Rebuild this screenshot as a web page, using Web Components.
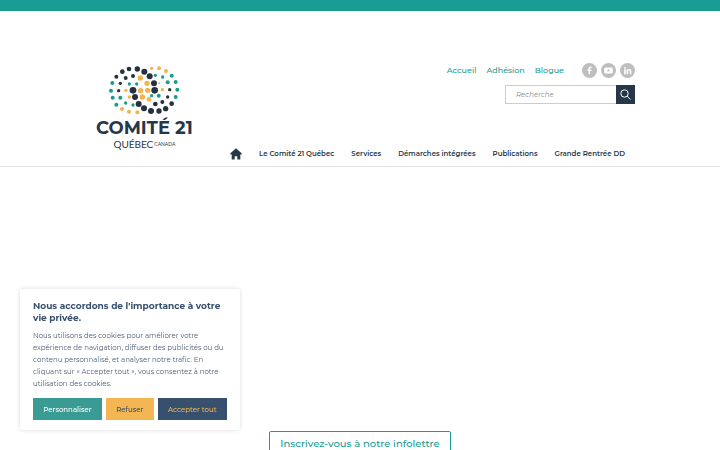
<!DOCTYPE html>
<html lang="fr">
<head>
<meta charset="utf-8">
<meta name="viewport" content="width=device-width, initial-scale=1">
<title>Comité 21 Québec</title>
<style>
  html {
    scrollbar-width: none;
  }

  body {
    --teal: #189c93;
    --navy: #26374a;
    margin: 0;
    background: #fff;
    color: var(--navy);
    font-family: Montserrat, Inter, "Open Sans", sans-serif;
  }
</style>
</head>
<body>
<site-header></site-header>
<newsletter-banner>Inscrivez-vous à notre infolettre</newsletter-banner>
<cookie-notice>
  <span slot="title">Nous accordons de l'importance à votre vie privée.</span>
  Nous utilisons des cookies pour améliorer votre expérience de navigation, diffuser des publicités ou du contenu personnalisé, et analyser notre trafic. En cliquant sur « Accepter tout », vous consentez à notre utilisation des cookies.
</cookie-notice>

<script>
class SiteLogo extends HTMLElement {
  connectedCallback() {
    // x, y, radius for each colour of the globe
    const dots = {
      "#26303f": [
        [72, 19, 7], [97, 19, 8], [52, 27, 7], [34, 42, 6], [118, 27, 9],
        [84, 40, 6], [62, 46, 6], [46, 62, 5], [41, 84, 5], [84, 83, 10],
        [90, 103, 9], [101, 124, 9], [117, 137, 9], [138, 145, 9],
        [162, 145, 8], [182, 138, 8], [200, 123, 7], [151, 124, 7],
        [172, 118, 6], [134, 41, 9], [147, 62, 9], [149, 83, 10],
        [194, 81, 5], [188, 103, 5],
      ],
      "#189c8d": [
        [22, 61, 6], [73, 64, 5], [95, 64, 5], [18, 84, 6], [23, 105, 6],
        [46, 105, 6], [34, 126, 6], [62, 121, 5], [84, 127, 5],
        [151, 38, 5], [173, 43, 5], [200, 39, 6], [188, 59, 6],
        [212, 58, 6], [217, 81, 6], [212, 103, 6], [140, 99, 5],
        [161, 99, 6],
      ],
      "#f4b34d": [
        [106, 46, 8], [63, 83, 5], [107, 84, 8], [73, 103, 5],
        [112, 103, 8], [51, 139, 6], [72, 147, 6], [97, 149, 6],
        [140, 17, 5], [162, 17, 6], [183, 25, 6], [126, 62, 8],
        [162, 62, 3], [128, 83, 8], [172, 81, 5], [132, 110, 7],
      ],
    };

    const circles = Object.entries(dots).map(([fill, list]) =>
      `<g fill="${fill}">${list.map(([x, y, r]) => `<circle cx="${x}" cy="${y}" r="${r}"/>`).join("")}</g>`
    ).join("");

    this.attachShadow({ mode: "open" }).innerHTML = `
      <style>
        :host {
          display: block;
        }

        a {
          display: flex;
          flex-direction: column;
          align-items: center;
          color: var(--navy);
          text-decoration: none;
          white-space: nowrap;
        }

        svg {
          width: 72px;
          height: 52px;
          margin-bottom: 2px;
        }

        .name {
          font-size: 18px;
          line-height: 20px;
          font-weight: 700;
        }

        .place {
          display: flex;
          align-items: center;
          gap: 1px;
          font-family: Lato, sans-serif;
          font-size: 10px;
          line-height: 12px;
        }

        small {
          font-size: 5px;
        }
      </style>
      <a href="#">
        <svg viewBox="9 4 216 156" aria-hidden="true">${circles}</svg>
        <span class="name">COMITÉ 21</span>
        <span class="place">QUÉBEC <small>CANADA</small></span>
      </a>
    `;
  }
}

class SocialLink extends HTMLElement {
  connectedCallback() {
    const icons = {
      Facebook: `<path d="M6.600 11.200V8H5.400V6.500h1.200V5.400c0-1.200.7-1.900 1.900-1.900l1 .1v1.300h-.7c-.5 0-.7.3-.7.7v.9h1.300L9.200 8H8.100v3.200z"/>`,
      YouTube: `<path fill-rule="evenodd" d="M5 4.400h5c1.300 0 1.800.6 1.800 1.700v2.800c0 1.100-.5 1.700-1.800 1.700H5c-1.300 0-1.800-.6-1.800-1.700V6.100C3.200 5 3.700 4.400 5 4.400zM6.600 6v3l2.500-1.500z"/>`,
      LinkedIn: `<path d="M4 6.200h1.600v5H4zM4 3.900h1.600v1.500H4zM6.500 6.200H8v.7c.4-.6.9-.8 1.500-.8 1.300 0 1.800.8 1.800 2.100v3H9.700V8.500c0-.6-.2-1-.8-1-.5 0-.8.4-.8 1v2.700H6.500z"/>`,
    };
    const name = this.getAttribute("name");

    this.attachShadow({ mode: "open" }).innerHTML = `
      <style>
        :host {
          display: block;
        }

        a {
          display: block;
          width: 15px;
          height: 15px;
          border-radius: 50%;
          background: #bebebe;
        }

        svg {
          display: block;
          fill: #fff;
        }
      </style>
      <a href="#" aria-label="${name}">
        <svg viewBox="0 0 15 15" aria-hidden="true">${icons[name]}</svg>
      </a>
    `;
  }
}

class SearchBox extends HTMLElement {
  connectedCallback() {
    this.attachShadow({ mode: "open" }).innerHTML = `
      <style>
        :host {
          display: block;
        }

        form {
          display: flex;
          width: 130px;
          height: 19px;
          box-sizing: border-box;
        }

        input {
          flex: 1;
          min-width: 0;
          box-sizing: border-box;
          padding: 0 10px;
          border: 1px solid #ccc;
          border-right: 0;
          border-radius: 0;
          font: italic 7px Montserrat, Inter, sans-serif;
          color: #777;
        }

        input::placeholder {
          color: #8c8c8c;
        }

        button {
          display: grid;
          place-items: center;
          width: 19px;
          padding: 0;
          border: 0;
          background: var(--navy);
        }

        svg {
          width: 11px;
          height: 11px;
          fill: none;
          stroke: #fff;
        }
      </style>
      <form role="search">
        <input type="search" aria-label="Recherche" placeholder="Recherche">
        <button type="button" aria-label="Rechercher">
          <svg viewBox="0 0 11 11" aria-hidden="true"><circle cx="4.500" cy="4.500" r="3.700"/><path d="M7.200 7.200l3.300 3.300"/></svg>
        </button>
      </form>
    `;
  }
}

class MainNav extends HTMLElement {
  connectedCallback() {
    const items = ["Le Comité 21 Québec", "Services", "Démarches intégrées", "Publications", "Grande Rentrée DD"];

    this.attachShadow({ mode: "open" }).innerHTML = `
      <style>
        :host {
          display: block;
        }

        nav {
          display: flex;
          align-items: center;
          gap: 17px;
          height: 12px;
          white-space: nowrap;
        }

        a {
          color: var(--navy);
          font-size: 7px;
          line-height: 12px;
          font-weight: 600;
          text-decoration: none;
        }

        svg {
          display: block;
          width: 12px;
          height: 12px;
          fill: var(--navy);
        }
      </style>
      <nav aria-label="Menu principal">
        <a href="#" aria-label="Accueil">
          <svg viewBox="0 0 12 12" aria-hidden="true"><path d="M6 .3L11.600 5.300V6.600H10.300V11.600H7.300V8.300H4.700v3.300H1.700V6.600H.4V5.300z"/></svg>
        </a>
        ${items.map((item) => `<a href="#">${item}</a>`).join("")}
      </nav>
    `;
  }
}

class SiteHeader extends HTMLElement {
  connectedCallback() {
    this.attachShadow({ mode: "open" }).innerHTML = `
      <style>
        :host {
          display: block;
          border-top: 11px solid var(--teal);
          border-bottom: 1px solid #e4e4e4;
        }

        .inner {
          display: flex;
          justify-content: space-between;
          max-width: 540px;
          margin: 0 auto;
          padding: 52px 0 6px;
        }

        site-logo {
          margin: 1px 0 10px 6px;
        }

        .side {
          display: flex;
          flex-direction: column;
          align-items: flex-end;
          margin-right: -5px;
        }

        .links {
          display: flex;
          align-items: center;
          gap: 10px;
        }

        .links a {
          color: var(--teal);
          font-size: 8px;
          line-height: 15px;
          font-weight: 500;
          text-decoration: none;
        }

        .social {
          display: flex;
          gap: 4px;
          margin-left: 8px;
        }

        search-box {
          margin-top: 7px;
        }

        main-nav {
          margin: auto 10px 0 0;
        }
      </style>
      <header class="inner">
        <site-logo></site-logo>
        <div class="side">
          <div class="links">
            <a href="#">Accueil</a>
            <a href="#">Adhésion</a>
            <a href="#">Blogue</a>
            <div class="social">
              <social-link name="Facebook"></social-link>
              <social-link name="YouTube"></social-link>
              <social-link name="LinkedIn"></social-link>
            </div>
          </div>
          <search-box></search-box>
          <main-nav></main-nav>
        </div>
      </header>
    `;
  }
}

class NewsletterBanner extends HTMLElement {
  connectedCallback() {
    this.attachShadow({ mode: "open" }).innerHTML = `
      <style>
        :host {
          display: flex;
          justify-content: center;
          padding: 264px 20px 40px;
        }

        a {
          padding: 0 10px;
          border: 1px solid var(--teal);
          border-radius: 2px;
          color: var(--teal);
          font-size: 10px;
          line-height: 24px;
          font-weight: 500;
          text-decoration: none;
        }
      </style>
      <a href="#"><slot></slot></a>
    `;
  }
}

class CookieNotice extends HTMLElement {
  connectedCallback() {
    this.attachShadow({ mode: "open" }).innerHTML = `
      <style>
        :host {
          display: block;
          position: fixed;
          left: 20px;
          bottom: 20px;
          width: 220px;
          box-sizing: border-box;
          padding: 11px 13px 10px;
          border-radius: 3px;
          background: #fff;
          box-shadow: 0 0 4px rgba(0, 0, 0, .15);
        }

        h2 {
          margin: 0 0 6px;
          color: #36506e;
          font-size: 9px;
          line-height: 12px;
          font-weight: 700;
        }

        p {
          margin: 0 0 8px;
          color: #4c5d73;
          font-size: 7px;
          line-height: 12px;
        }

        .actions {
          display: flex;
          gap: 4px;
        }

        button {
          flex: auto;
          height: 22px;
          padding: 0 8px;
          border: 0;
          font: 500 7px Montserrat, Inter, sans-serif;
          white-space: nowrap;
        }

        .custom {
          background: #3a9b95;
          color: #fff;
        }

        .refuse {
          background: #f4b653;
          color: #36506e;
        }

        .accept {
          background: #36506e;
          color: #f4b653;
        }
      </style>
      <h2><slot name="title"></slot></h2>
      <p><slot></slot></p>
      <div class="actions">
        <button class="custom" type="button">Personnaliser</button>
        <button class="refuse" type="button">Refuser</button>
        <button class="accept" type="button">Accepter tout</button>
      </div>
    `;
  }
}

customElements.define("site-logo", SiteLogo);
customElements.define("social-link", SocialLink);
customElements.define("search-box", SearchBox);
customElements.define("main-nav", MainNav);
customElements.define("site-header", SiteHeader);
customElements.define("newsletter-banner", NewsletterBanner);
customElements.define("cookie-notice", CookieNotice);
</script>
</body>
</html>
